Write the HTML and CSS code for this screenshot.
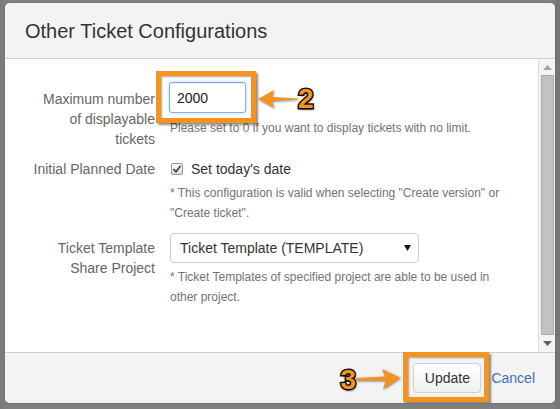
FILE: index.html
```html
<!DOCTYPE html>
<html>
<head>
<meta charset="utf-8">
<link rel="stylesheet" href="styles.css">
</head>
<body>
<div class="page"></div>

<div class="modal">
  <div class="modal-header"><h2 class="title">Other Ticket Configurations</h2></div>
  <div class="modal-body">
    <div class="form">
      <div class="row row1">
        <div class="lbl lbl1">Maximum number<br>of displayable<br>tickets</div>
        <div class="ctrl">
          <div class="input-wrap">
            <input class="num" type="text" value="2000">
            <span class="hl hl-input"></span>
            <span class="callout callout2">
              <svg class="arrow" width="40" height="20" viewBox="0 0 40 20"><path d="M0 10 L16 1 L13.5 8 L40 9.4 L40 10.6 L13.5 12 L16 19 Z" fill="#f6921e"/></svg>
              <span class="digit">2</span>
            </span>
          </div>
          <p class="help help1">Please set to 0 if you want to display tickets with no limit.</p>
        </div>
      </div>
      <div class="row row2">
        <div class="lbl lbl2">Initial Planned Date</div>
        <div class="ctrl">
          <div class="check-line">
            <span class="checkbox"><svg width="10" height="10" viewBox="0 0 10 10"><path d="M1.5 5.2 L4 7.8 L8.6 1.8" fill="none" stroke="#444" stroke-width="1.7"/></svg></span>
            <span class="check-text">Set today's date</span>
          </div>
          <p class="help">* This configuration is valid when selecting "Create version" or<br>"Create ticket".</p>
        </div>
      </div>
      <div class="row row3">
        <div class="lbl lbl3">Ticket Template<br>Share Project</div>
        <div class="ctrl">
          <div class="select">
            <span class="select-text">Ticket Template (TEMPLATE)</span>
            <svg class="caret" width="7" height="6" viewBox="0 0 7 6"><path d="M0 0 L7 0 L3.5 6 Z" fill="#111"/></svg>
          </div>
          <p class="help">* Ticket Templates of specified project are able to be used in<br>other project.</p>
        </div>
      </div>
    </div>
    <div class="scrollbar">
      <svg class="sb-arrow" width="9" height="5" viewBox="0 0 9 5"><path d="M0 5 L4.5 0 L9 5 Z" fill="#a3a3a3"/></svg>
      <div class="sb-thumb"></div>
      <svg class="sb-arrow" width="9" height="5" viewBox="0 0 9 5"><path d="M0 0 L9 0 L4.5 5 Z" fill="#606060"/></svg>
    </div>
  </div>
  <div class="modal-footer">
    <div class="btn-wrap">
      <span class="callout callout3">
        <span class="digit">3</span>
        <svg class="arrow" width="44" height="22" viewBox="0 0 44 22"><path d="M0 10 L29 8.6 L26 1 L44 9.5 L27 21 L29.5 12.4 L0 12.4 Z" fill="#f6921e"/></svg>
      </span>
      <button class="btn" type="button">Update</button>
      <span class="hl hl-btn"></span>
    </div>
    <a class="cancel" href="#">Cancel</a>
  </div>
</div>
</body>
</html>
```

FILE: styles.css
```css
html, body {
  margin: 0;
  padding: 0;
}
body {
  width: 560px;
  height: 409px;
  overflow: hidden;
  background: #7f7f7f;
  font-family: "Liberation Sans", Arial, sans-serif;
  position: relative;
}
.page {
  height: 409px;
  background: linear-gradient(to right, #7a7a7a 0, #7f7f7f 5px, #7f7f7f 555px, #767676 556px);
}

.modal {
  position: absolute;
  left: 5px;
  top: 3px;
  width: 550px;
  height: 400px;
  background: #fff;
  border-radius: 5px;
  overflow: hidden;
  display: flex;
  flex-direction: column;
  box-shadow: 0 0 2px rgba(0,0,0,0.3);
}
.modal-header {
  background: #f3f3f3;
  border-bottom: 1px solid #cfcfcf;
  box-sizing: border-box;
  height: 56px;
  padding: 2px 0 0 20px;
}
.title {
  margin: 0;
  font-size: 20px;
  font-weight: normal;
  line-height: 53px;
  color: #333;
}
.modal-body {
  height: 293px;
  display: flex;
  border-bottom: 1px solid #cfcfcf;
}
.form {
  flex: 1;
  padding-top: 23px;
}
.row {
  display: grid;
  grid-template-columns: 150px 1fr;
  column-gap: 15px;
}
.row2, .row3 { margin-top: 10px; }
.lbl {
  text-align: right;
  font-size: 14px;
  line-height: 20px;
  color: #666;
  white-space: nowrap;
}
.lbl1 { padding-top: 7px; }
.lbl3 { padding-top: 5px; }
.ctrl {
  display: flex;
  flex-direction: column;
  align-items: flex-start;
}
.input-wrap {
  position: relative;
  margin-left: -1px;
}
.num {
  display: block;
  box-sizing: border-box;
  width: 77px;
  height: 31px;
  margin: 0;
  padding: 0 7px;
  border: 1px solid #7eaef0;
  border-radius: 3px;
  box-shadow: inset 0 1px 1px rgba(0,0,0,0.075), 0 0 3px rgba(102,160,233,0.5);
  font-family: "Liberation Sans", Arial, sans-serif;
  font-size: 14px;
  color: #222;
  outline: none;
}
.hl {
  position: absolute;
  border: 5px solid #f6921e;
  box-shadow: 2px 2px 2px rgba(0,0,0,0.45), inset 1px 1px 2px rgba(0,0,0,0.35);
  pointer-events: none;
}
.hl-input {
  left: -13px;
  top: -11px;
  right: -10px;
  bottom: -10px;
}
.callout {
  position: absolute;
  display: flex;
  align-items: center;
}
.arrow {
  display: block;
  filter: drop-shadow(1px 1px 1px rgba(0,0,0,0.45));
}
.digit {
  font-family: "Liberation Sans", Arial, sans-serif;
  font-weight: bold;
  font-size: 28px;
  line-height: 26px;
  color: #f6921e;
  -webkit-text-stroke: 3px #111;
  paint-order: stroke fill;
  text-shadow: 1px 2px 2px rgba(0,0,0,0.5);
}
.callout2 {
  left: 89px;
  top: 4px;
}
.help {
  margin: 4px 0 0;
  font-size: 12px;
  line-height: 20px;
  color: #737373;
  white-space: nowrap;
}
.help1 { margin-top: 5px; }
.check-line {
  display: flex;
  align-items: center;
  height: 20px;
  font-size: 14px;
  color: #333;
}
.checkbox {
  box-sizing: border-box;
  width: 12px;
  height: 12px;
  margin-left: 1px;
  margin-right: 8px;
  border: 1px solid #959595;
  border-radius: 2px;
  background: linear-gradient(#fafafa, #dcdcdc);
  display: flex;
  align-items: center;
  justify-content: center;
}
.checkbox svg { display: block; }
.select {
  box-sizing: border-box;
  width: 249px;
  height: 30px;
  border: 1px solid #cccccc;
  border-radius: 4px;
  display: flex;
  align-items: center;
  justify-content: space-between;
  padding: 0 7px 0 9px;
  font-size: 14px;
  color: #333;
  background: #fff;
}
.caret { display: block; }
.scrollbar {
  width: 17px;
  box-sizing: border-box;
  border-left: 1px solid #dcdcdc;
  background: #f4f4f4;
  display: flex;
  flex-direction: column;
  align-items: center;
  padding: 6px 0 6px;
}
.sb-arrow { display: block; }
.sb-thumb {
  width: 13px;
  box-sizing: border-box;
  flex: 1;
  margin: 5px 0 6px;
  background: #c2c2c2;
  border: 1px solid #a9a9a9;
}
.modal-footer {
  flex: 1;
  background: #f3f3f3;
  display: flex;
  align-items: center;
  justify-content: flex-end;
  padding-right: 20px;
}
.btn-wrap {
  position: relative;
  margin-right: 10px;
}
.btn {
  display: block;
  box-sizing: border-box;
  width: 68px;
  height: 30px;
  margin: 0;
  border: 1px solid #cfcfcf;
  border-radius: 4px;
  background: linear-gradient(#ffffff, #f0f0f0);
  font-family: "Liberation Sans", Arial, sans-serif;
  font-size: 14px;
  color: #333;
}
.hl-btn {
  left: -10px;
  top: -11px;
  right: -8px;
  bottom: -9px;
}
.callout3 {
  left: -73px;
  top: 4px;
}
.callout3 .arrow { margin-top: -2px; }
.cancel {
  font-size: 14px;
  color: #3b73af;
  text-decoration: none;
}
```
